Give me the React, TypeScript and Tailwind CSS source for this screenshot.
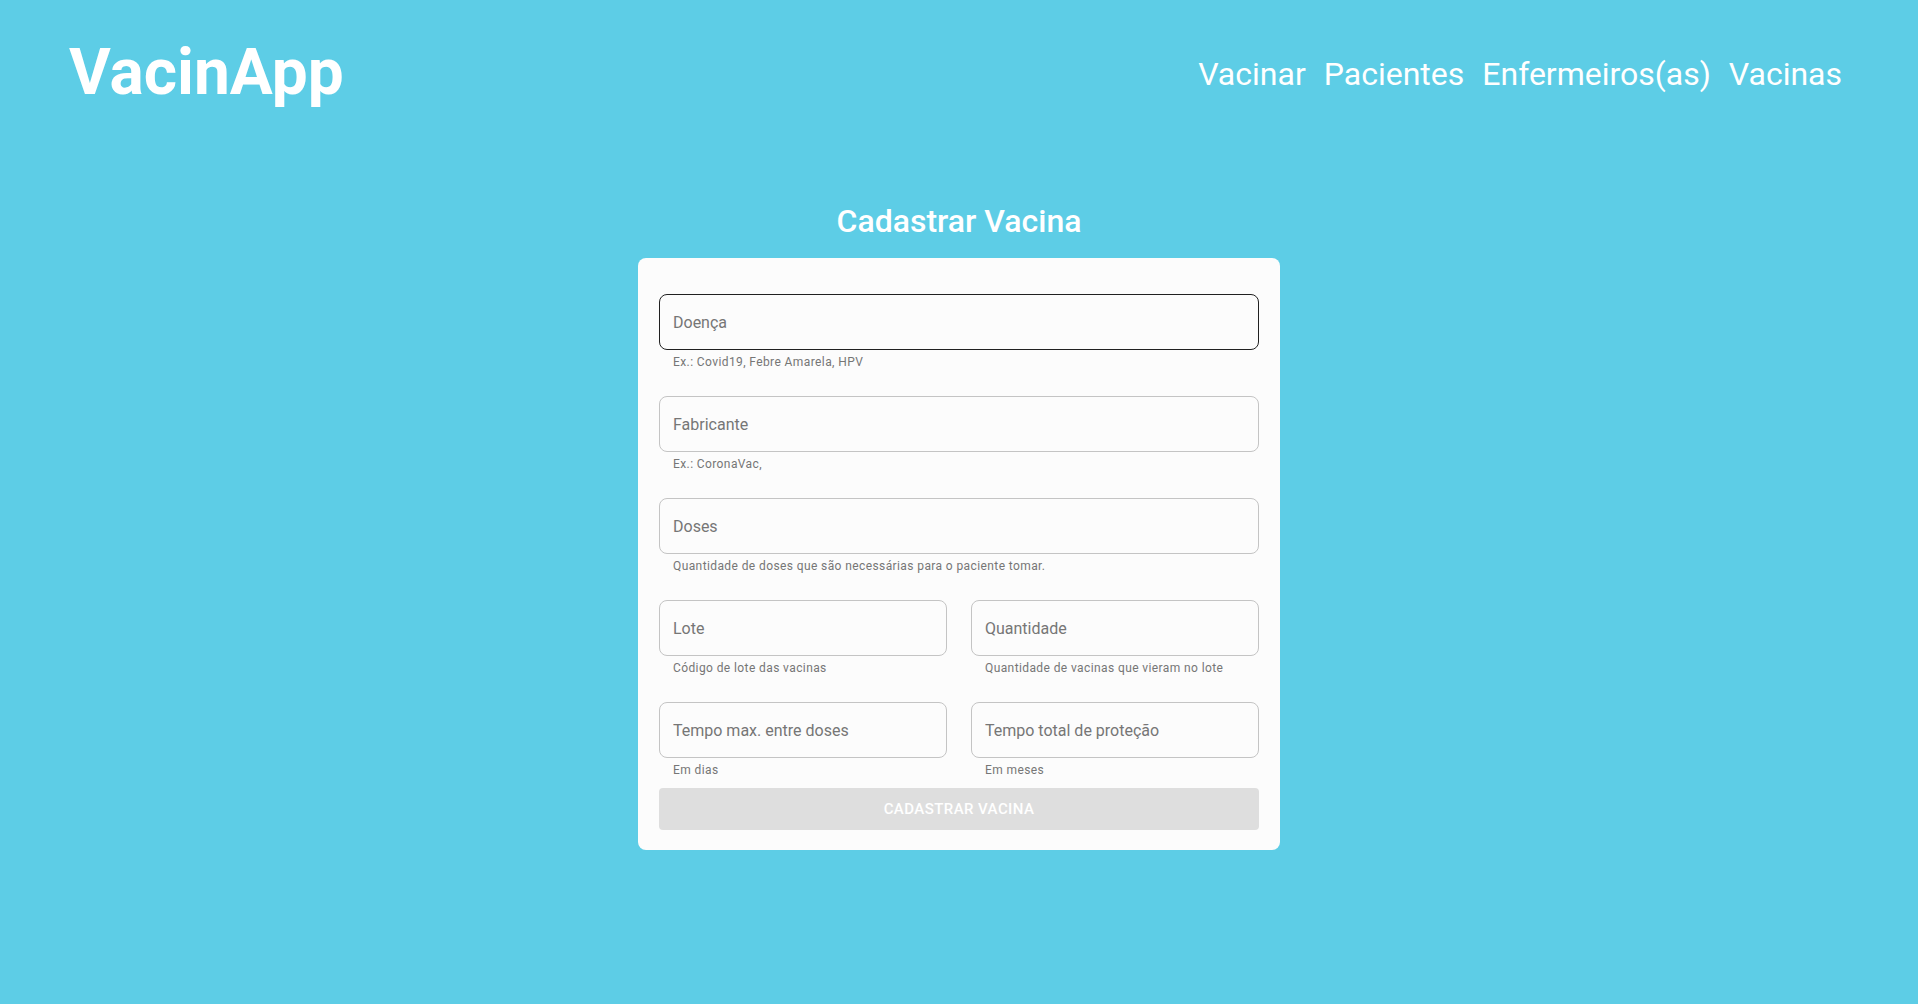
const navLinks = ['Vacinar', 'Pacientes', 'Enfermeiros(as)', 'Vacinas'];

type Field = {
  label: string;
  helper: string;
  focused?: boolean;
};

const rows: Field[][] = [
  [{ label: 'Doença', helper: 'Ex.: Covid19, Febre Amarela, HPV', focused: true }],
  [{ label: 'Fabricante', helper: 'Ex.: CoronaVac,' }],
  [{ label: 'Doses', helper: 'Quantidade de doses que são necessárias para o paciente tomar.' }],
  [
    { label: 'Lote', helper: 'Código de lote das vacinas' },
    { label: 'Quantidade', helper: 'Quantidade de vacinas que vieram no lote' },
  ],
  [
    { label: 'Tempo max. entre doses', helper: 'Em dias' },
    { label: 'Tempo total de proteção', helper: 'Em meses' },
  ],
];

function TextField({ field }: { field: Field }) {
  return (
    <div className="mt-4 mb-2 flex min-w-0 flex-1 flex-col">
      <input
        type="text"
        placeholder={field.label}
        className={
          field.focused
            ? 'h-14 w-full rounded-lg border border-[#212121] bg-transparent px-[13px] text-base leading-[23px] text-[#212121] outline-none placeholder:text-[#767676]'
            : 'h-14 w-full rounded-lg border border-[#c4c4c4] bg-transparent px-[13px] text-base leading-[23px] text-[#212121] outline-none placeholder:text-[#767676]'
        }
      />
      <p className="mx-[14px] mt-[3px] text-xs leading-[19px] tracking-[0.4px] text-[#767676]">
        {field.helper}
      </p>
    </div>
  );
}

export default function App() {
  return (
    <div className="min-h-screen bg-[#5dcde6] font-['Roboto',sans-serif] text-white">
      <header className="flex h-[146px] items-center justify-between pl-[69px] pr-[76px]">
        <h1 className="text-[64px] font-bold leading-none">VacinApp</h1>
        <nav className="mt-[2px] flex items-center gap-[18px]">
          {navLinks.map((link) => (
            <a key={link} href="#" className="text-[32px] leading-none text-white">
              {link}
            </a>
          ))}
        </nav>
      </header>

      <main className="flex flex-col items-center pb-16">
        <h2 className="mt-[56px] mb-[18px] text-[32px] font-medium leading-[38px]">
          Cadastrar Vacina
        </h2>
        <form className="flex w-[642px] flex-col rounded-lg bg-[#fcfcfc] px-[21px] pt-[20px] pb-[20px]">
          {rows.map((row, i) => (
            <div key={i} className="flex gap-6">
              {row.map((field) => (
                <TextField key={field.label} field={field} />
              ))}
            </div>
          ))}
          <button
            type="button"
            disabled
            className="h-[42px] w-full rounded bg-[#dedede] text-[15px] font-medium uppercase tracking-[0.43px] text-white"
          >
            Cadastrar Vacina
          </button>
        </form>
      </main>
    </div>
  );
}
